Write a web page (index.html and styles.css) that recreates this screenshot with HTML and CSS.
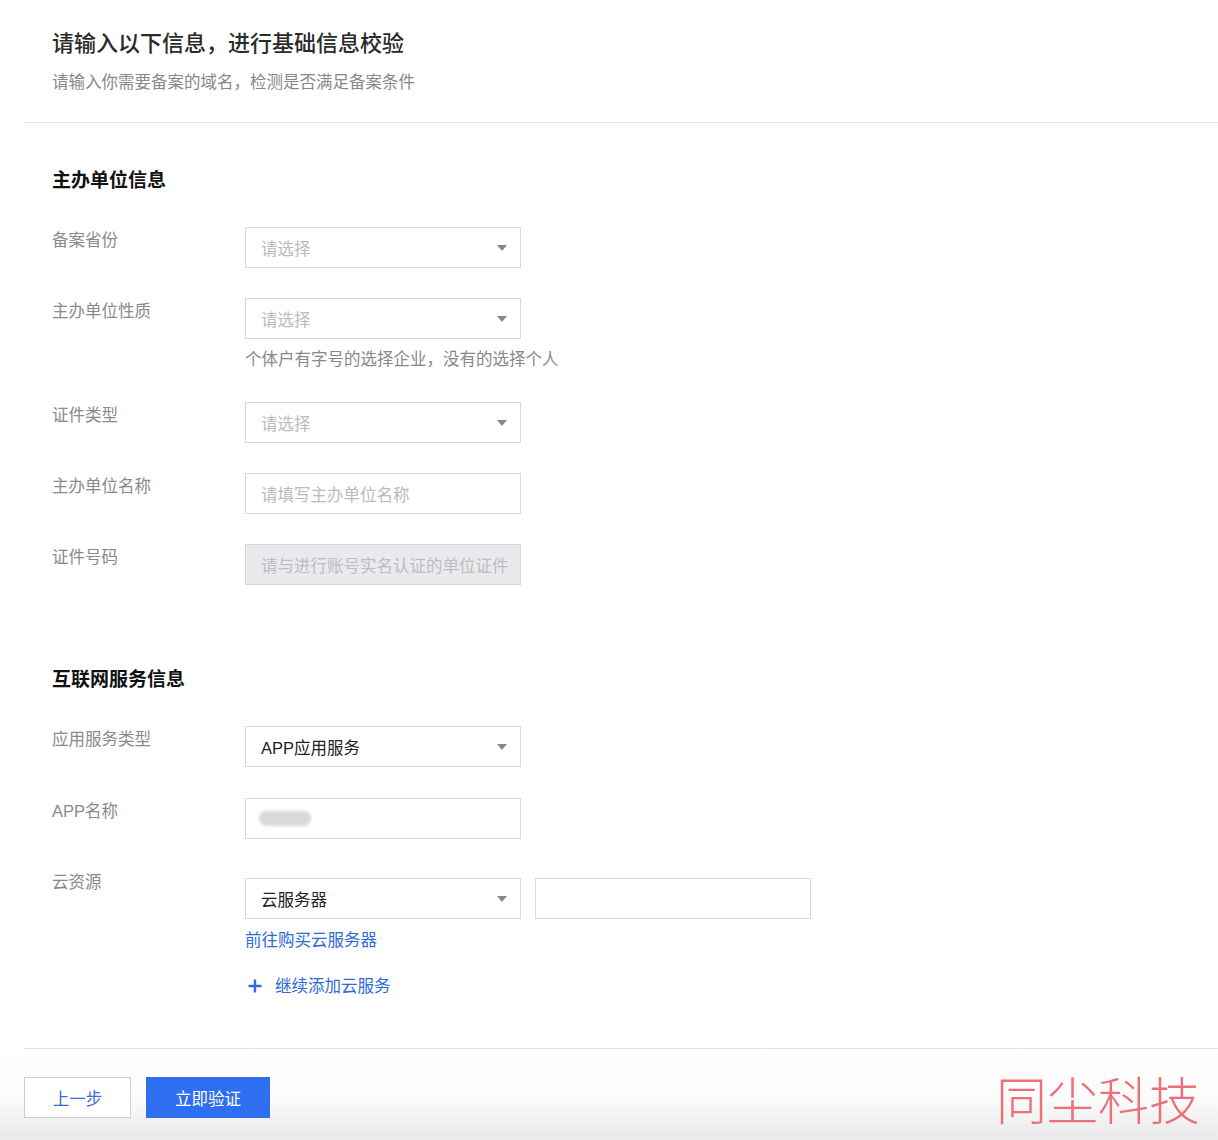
FILE: index.html
```html
<!DOCTYPE html>
<html lang="zh-CN">
<head>
<meta charset="utf-8">
<title>基础信息校验</title>
<link rel="stylesheet" href="styles.css">
</head>
<body>
<div class="page">
  <header class="header">
    <h1 class="title">请输入以下信息，进行基础信息校验</h1>
    <p class="subtitle">请输入你需要备案的域名，检测是否满足备案条件</p>
  </header>

  <section class="section section-first">
    <h2 class="section-title">主办单位信息</h2>
    <div class="row">
      <div class="label">备案省份</div>
      <div class="control">
        <div class="select placeholder"><span>请选择</span><i class="arrow"></i></div>
      </div>
    </div>
    <div class="row">
      <div class="label">主办单位性质</div>
      <div class="control">
        <div class="select placeholder"><span>请选择</span><i class="arrow"></i></div>
        <div class="help">个体户有字号的选择企业，没有的选择个人</div>
      </div>
    </div>
    <div class="row">
      <div class="label">证件类型</div>
      <div class="control">
        <div class="select placeholder"><span>请选择</span><i class="arrow"></i></div>
      </div>
    </div>
    <div class="row">
      <div class="label">主办单位名称</div>
      <div class="control">
        <div class="input placeholder">请填写主办单位名称</div>
      </div>
    </div>
    <div class="row">
      <div class="label">证件号码</div>
      <div class="control">
        <div class="input disabled">请与进行账号实名认证的单位证件</div>
      </div>
    </div>
  </section>

  <section class="section section-second">
    <h2 class="section-title">互联网服务信息</h2>
    <div class="row row-type">
      <div class="label">应用服务类型</div>
      <div class="control">
        <div class="select"><span>APP应用服务</span><i class="arrow"></i></div>
      </div>
    </div>
    <div class="row row-app">
      <div class="label">APP名称</div>
      <div class="control">
        <div class="input"><span class="blur"></span></div>
      </div>
    </div>
    <div class="row">
      <div class="label label-raised">云资源</div>
      <div class="control">
        <div class="inline">
          <div class="select"><span>云服务器</span><i class="arrow"></i></div>
          <div class="input"></div>
        </div>
        <a class="link buy">前往购买云服务器</a>
        <a class="link add">
          <svg class="plus" width="14" height="14" viewBox="0 0 14 14"><path d="M7 0.5V13.5M0.5 7H13.5" stroke="#2d6be0" stroke-width="2.4" fill="none"/></svg>
          <span>继续添加云服务</span>
        </a>
      </div>
    </div>
  </section>

  <footer class="footer">
    <div class="footer-inner">
      <button class="btn btn-default">上一步</button>
      <button class="btn btn-primary">立即验证</button>
    </div>
    <div class="watermark">同尘科技</div>
  </footer>
</div>
</body>
</html>
```

FILE: styles.css
```css
* { box-sizing: border-box; }
html, body { margin: 0; padding: 0; background: #fff; }
body {
  font-family: "Liberation Sans", "Noto Sans CJK SC", sans-serif;
  color: #222;
  width: 1218px;
  min-height: 1140px;
}
.page { width: 1218px; min-height: 1140px; display: flex; flex-direction: column; }

.header {
  margin-left: 24px;
  padding: 28px 0 28px 28px;
  border-bottom: 1px solid #e6e6e6;
}
.title {
  margin: 0;
  font-size: 22px;
  line-height: 32px;
  font-weight: 500;
  color: #2a2a2a;
}
.subtitle {
  margin: 10px 0 0;
  font-size: 16.5px;
  line-height: 24px;
  color: #888;
}

.section { padding-left: 52px; }
.section-first { margin-top: 45px; }
.section-second { margin-top: 82px; }
.section-title {
  margin: 0 0 33px;
  font-size: 19px;
  line-height: 26px;
  font-weight: 700;
  color: #111;
}

.row { display: flex; margin-bottom: 30px; }
.row:last-child { margin-bottom: 0; }
.row-type { margin-bottom: 31px; }
.row-app { margin-bottom: 39px; }
.label {
  width: 193px;
  flex: none;
  font-size: 16.5px;
  line-height: 26px;
  color: #8a8a8a;
}
.label-raised { margin-top: -9px; }
.control { display: flex; flex-direction: column; align-items: flex-start; }

.select, .input {
  width: 276px;
  height: 41px;
  border: 1px solid #d9d9d9;
  background: #fff;
  display: flex;
  align-items: center;
  padding: 0 12px 0 15px;
  font-size: 16.5px;
  color: #222;
  white-space: nowrap;
  overflow: hidden;
}
.select span { flex: 1; }
.placeholder { color: #bbb; }
.input.disabled {
  background: #e8eaed;
  border-color: #d6d6d6;
  color: #bdbdbd;
  padding-right: 4px;
}
.arrow {
  width: 0; height: 0;
  border-left: 5px solid transparent;
  border-right: 5px solid transparent;
  border-top: 6px solid #888;
  margin-right: 1px;
}
.help {
  margin-top: 7px;
  font-size: 16.5px;
  line-height: 26px;
  color: #888;
}
.blur {
  display: block;
  width: 52px;
  height: 15px;
  margin-left: -2px;
  border-radius: 8px;
  background: #d9d9d9;
  filter: blur(1.5px);
}
.inline { display: flex; gap: 14px; }

.link {
  color: #2e6bd6;
  font-size: 16.5px;
  line-height: 22px;
  text-decoration: none;
  display: flex;
  align-items: center;
}
.buy { margin-top: 10px; }
.add { margin-top: 24px; padding-left: 3px; }
.add .plus { margin-right: 13px; }

.footer {
  margin-top: 51px;
  flex: 1;
  position: relative;
  background: linear-gradient(#ffffff 0%, #fbfbfb 55%, #e9e9e9 100%);
}
.footer-inner {
  margin-left: 24px;
  border-top: 1px solid #e3e3e3;
  padding: 28px 0 22px;
  display: flex;
  gap: 15px;
}
.btn {
  height: 41px;
  font-family: "Liberation Sans", "Noto Sans CJK SC", sans-serif;
  font-size: 16.5px;
  cursor: pointer;
  padding: 0;
}
.btn-default {
  width: 107px;
  background: #fff;
  border: 1px solid #cfcfcf;
  color: #3b6cd1;
}
.btn-primary {
  width: 124px;
  background: #2d6ff0;
  border: 1px solid #2d6ff0;
  color: #fff;
}
.watermark {
  position: absolute;
  right: 18px;
  top: 20px;
  font-family: "Noto Sans CJK SC", sans-serif;
  font-weight: 300;
  font-size: 51px;
  line-height: 60px;
  color: #ec7078;
}
```
